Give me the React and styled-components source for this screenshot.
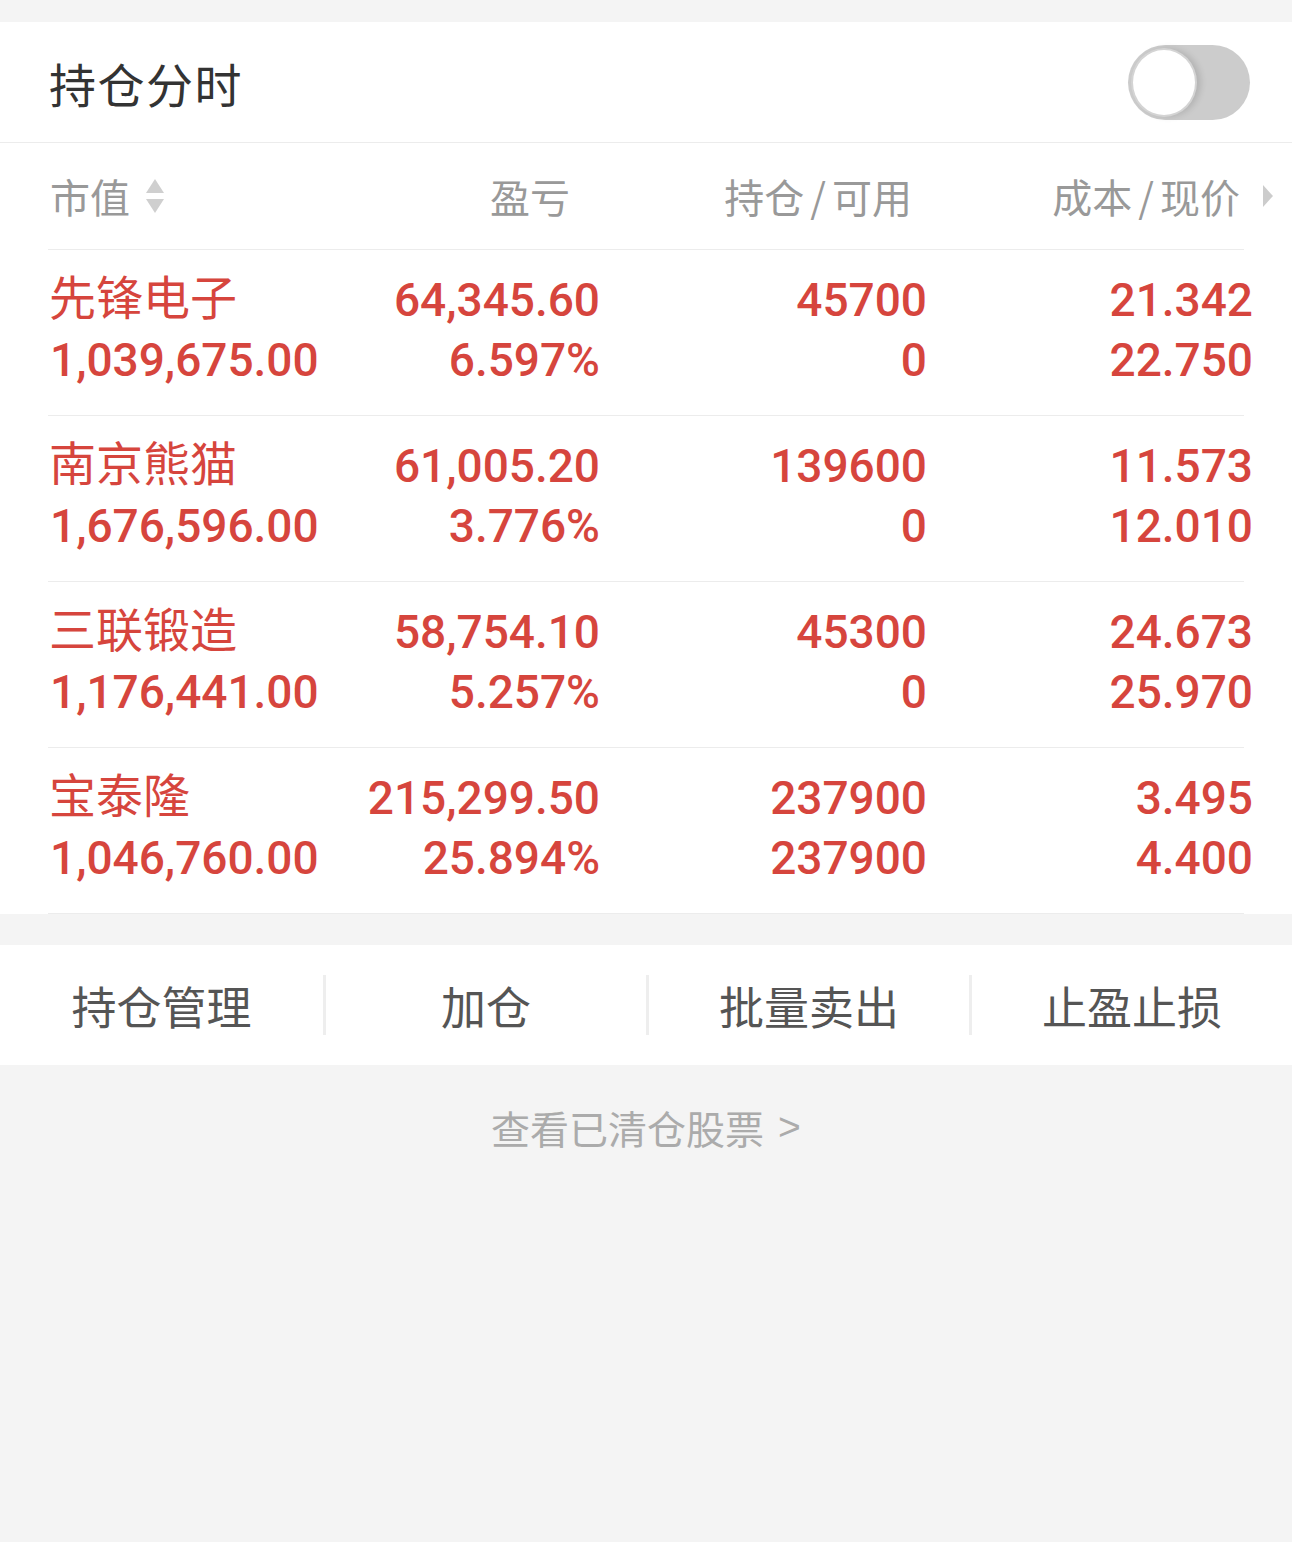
import React from 'react';
import styled, { createGlobalStyle } from 'styled-components';

const GlobalStyle = createGlobalStyle`
  body {
    margin: 0;
    background: #f4f4f4;
    font-family: Roboto, "Noto Sans CJK SC", sans-serif;
  }
`;

const positions = [
  { name: '先锋电子', value: '1,039,675.00', profit: '64,345.60', rate: '6.597%', hold: '45700', avail: '0', cost: '21.342', price: '22.750' },
  { name: '南京熊猫', value: '1,676,596.00', profit: '61,005.20', rate: '3.776%', hold: '139600', avail: '0', cost: '11.573', price: '12.010' },
  { name: '三联锻造', value: '1,176,441.00', profit: '58,754.10', rate: '5.257%', hold: '45300', avail: '0', cost: '24.673', price: '25.970' },
  { name: '宝泰隆', value: '1,046,760.00', profit: '215,299.50', rate: '25.894%', hold: '237900', avail: '237900', cost: '3.495', price: '4.400' },
];

const actions = ['持仓管理', '加仓', '批量卖出', '止盈止损'];

const SortIcon = () => (
  <svg width="22" height="38" viewBox="0 0 22 38">
    <path d="M11 2 L20 16 L2 16 Z" fill="#cfcfcf" />
    <path d="M2 22 L20 22 L11 36 Z" fill="#cfcfcf" />
  </svg>
);

const RightTriangle = () => (
  <svg width="12" height="24" viewBox="0 0 12 24">
    <path d="M1 1 L11 12 L1 23 Z" fill="#cccccc" />
  </svg>
);

export default function App() {
  return (
    <Page>
      <GlobalStyle />
      <TopBar>
        <Title>持仓分时</Title>
        <Toggle>
          <Knob />
        </Toggle>
      </TopBar>
      <Table>
        <HeadRow>
          <HeadCell>
            市值 <SortIcon />
          </HeadCell>
          <HeadCell align="end" pad={30}>盈亏</HeadCell>
          <HeadCell align="end" pad={15}>持仓<Slash>/</Slash>可用</HeadCell>
          <HeadCell align="end" pad={0}>
            成本<Slash>/</Slash>现价
            <ArrowWrap>
              <RightTriangle />
            </ArrowWrap>
          </HeadCell>
        </HeadRow>
        {positions.map((p, i) => (
          <Row key={i}>
            <Cell>
              <Name>{p.name}</Name>
              <Num>{p.value}</Num>
            </Cell>
            <Cell align="end">
              <Num>{p.profit}</Num>
              <Num>{p.rate}</Num>
            </Cell>
            <Cell align="end">
              <Num>{p.hold}</Num>
              <Num>{p.avail}</Num>
            </Cell>
            <Cell align="end">
              <Num>{p.cost}</Num>
              <Num>{p.price}</Num>
            </Cell>
          </Row>
        ))}
      </Table>
      <ActionBar>
        {actions.map((a, i) => (
          <Action key={a} first={i === 0}>
            {a}
          </Action>
        ))}
      </ActionBar>
      <ClearedLink>
        查看已清仓股票 <Chevron>&gt;</Chevron>
      </ClearedLink>
    </Page>
  );
}

const Page = styled.div`
  min-height: 1542px;
  padding-top: 22px;
  box-sizing: border-box;
  background: #f4f4f4;
`;

const TopBar = styled.div`
  display: flex;
  align-items: center;
  justify-content: space-between;
  height: 120px;
  padding: 0 42px 0 49px;
  background: #fff;
  border-bottom: 1px solid #ececec;
`;

const Title = styled.div`
  font-family: "Noto Sans CJK SC", sans-serif;
  font-size: 47px;
  color: #333;
  letter-spacing: 1.5px;
`;

const Toggle = styled.div`
  position: relative;
  width: 122px;
  height: 75px;
  border-radius: 38px;
  background: #cccccc;
`;

const Knob = styled.div`
  position: absolute;
  left: 3px;
  top: 3px;
  width: 66px;
  height: 69px;
  border-radius: 50%;
  background: #fff;
  box-sizing: border-box;
  border: 2px solid #d4d4d4;
  box-shadow: 4px 0 6px rgba(0, 0, 0, 0.12);
`;

const Table = styled.div`
  background: #fff;
`;

const HeadRow = styled.div`
  display: grid;
  grid-template-columns: 300px 250px 327px 326px;
  height: 107px;
  align-items: center;
  border-bottom: 1px solid #ececec;
  margin-left: 48px;
  padding-left: 2px;
  box-sizing: border-box;
  width: 1196px;
`;

const HeadCell = styled.div`
  display: flex;
  align-items: center;
  justify-content: ${p => (p.align === 'end' ? 'flex-end' : 'flex-start')};
  padding-right: ${p => p.pad || 0}px;
  font-family: "Noto Sans CJK SC", sans-serif;
  font-size: 40px;
  color: #999;
  white-space: nowrap;

  svg {
    margin-left: 14px;
  }
`;

const Slash = styled.span`
  margin: 0 6px;
  font-family: "Noto Sans CJK SC", sans-serif;
`;

const ArrowWrap = styled.span`
  display: flex;
  margin-left: 22px;
  margin-right: -21px;

  svg {
    margin-left: 0;
  }
`;

const Row = styled.div`
  display: grid;
  grid-template-columns: 300px 250px 327px 326px;
  margin-left: 48px;
  padding: 20px 0 25px 2px;
  width: 1196px;
  box-sizing: border-box;
  border-bottom: 1px solid #ececec;
`;

const Cell = styled.div`
  display: flex;
  flex-direction: column;
  align-items: ${p => (p.align === 'end' ? 'flex-end' : 'flex-start')};
  white-space: nowrap;
`;

const Name = styled.div`
  font-family: "Noto Sans CJK SC", sans-serif;
  font-size: 47px;
  line-height: 50px;
  margin: 0 0 10px -1px;
  color: #d6453d;
`;

const Num = styled.div`
  font-family: Roboto, sans-serif;
  font-weight: 500;
  font-size: 46px;
  line-height: 60px;
  color: #d6453d;
`;

const ActionBar = styled.div`
  display: grid;
  grid-template-columns: repeat(4, 1fr);
  align-items: center;
  height: 120px;
  margin-top: 31px;
  background: #fff;
`;

const Action = styled.div`
  display: flex;
  align-items: center;
  justify-content: center;
  height: 60px;
  border-left: ${p => (p.first ? 'none' : '3px solid #eeeeee')};
  font-family: "Noto Sans CJK SC", sans-serif;
  font-size: 45px;
  color: #555;
`;

const ClearedLink = styled.div`
  display: flex;
  justify-content: center;
  align-items: center;
  margin-top: 37px;
  line-height: 50px;
  font-family: "Noto Sans CJK SC", sans-serif;
  font-size: 39px;
  color: #ababab;
`;

const Chevron = styled.span`
  margin-left: 14px;
  font-family: "Liberation Sans", sans-serif;
`;
